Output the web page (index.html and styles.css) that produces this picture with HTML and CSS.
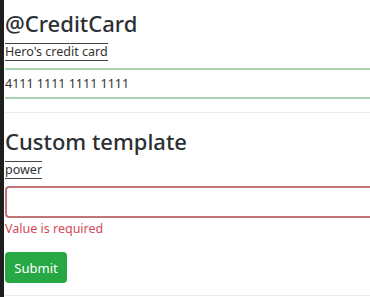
FILE: index.html
```html
<!DOCTYPE html>
<html lang="en">
<head>
    <meta charset="UTF-8">
    <meta name="viewport" content="width=device-width, initial-scale=1.0">
    <title>Credit card form</title>
    <link rel="stylesheet" href="styles.css">
</head>
<body>
    <div class="page">
        <div class="edge"></div>
        <div class="content">
            <h3>@CreditCard</h3>
            <label class="field-label" for="card">Hero's credit card</label>
            <input id="card" class="field-input is-valid" type="text" value="4111 1111 1111 1111">

            <hr class="divider">

            <h3>Custom template</h3>
            <label class="field-label" for="power">power</label>
            <input id="power" class="field-input is-invalid" type="text">
            <div class="invalid-feedback">Value is required</div>

            <button class="btn-submit" type="submit">Submit</button>
            <hr class="divider bottom">
        </div>
    </div>
</body>
</html>
```

FILE: styles.css
```css
body {
    margin: 0;
    padding: 0;
    font-family: "Noto Sans", "Open Sans", sans-serif;
    color: #212529;
    background-color: white;
    overflow: hidden;
}

.page {
    display: flex;
    height: 297px;
}

.edge {
    width: 4px;
    flex-shrink: 0;
    background-color: #1e1e1e;
}

.content {
    flex: 1;
    padding-left: 1px;
    padding-top: 8px;
    min-width: 0;
}

h3 {
    margin: 0;
    font-size: 22px;
    font-weight: 500;
    line-height: 30px;
    color: #2c2f33;
}

.field-label {
    display: inline-block;
    font-size: 12.5px;
    line-height: 16px;
    color: #333;
    border-top: 1px solid #444;
    border-bottom: 1px solid #444;
    margin-top: 5px;
}

.field-input {
    display: block;
    box-sizing: border-box;
    width: 100%;
    font-family: inherit;
    font-size: 12.5px;
    color: #333;
    background: white;
    outline: none;
}

.is-valid {
    margin-top: 7px;
    height: 31px;
    padding: 0;
    border: none;
    border-top: 2px solid #a9d3ae;
    border-bottom: 2px solid #a9d3ae;
}

/* 右端は画面外に切れている */
.is-invalid {
    margin-top: 7px;
    height: 32px;
    padding: 0 8px;
    border: 2px solid #c07477;
    border-right: none;
    border-radius: 4px 0 0 4px;
}

.divider {
    margin: 13px 0 0 0;
    border: none;
    border-top: 1px solid #ebebeb;
}

.divider + h3 {
    margin-top: 13px;
}

.invalid-feedback {
    font-size: 12.5px;
    line-height: 18px;
    margin-top: 2px;
    color: #d4495a;
}

.btn-submit {
    display: block;
    margin-top: 14px;
    height: 31px;
    width: 62px;
    padding: 0;
    font-family: inherit;
    font-size: 13px;
    color: white;
    background-color: #28a745;
    border: none;
    border-radius: 4px;
}

.divider.bottom {
    margin-top: 12px;
}
```
